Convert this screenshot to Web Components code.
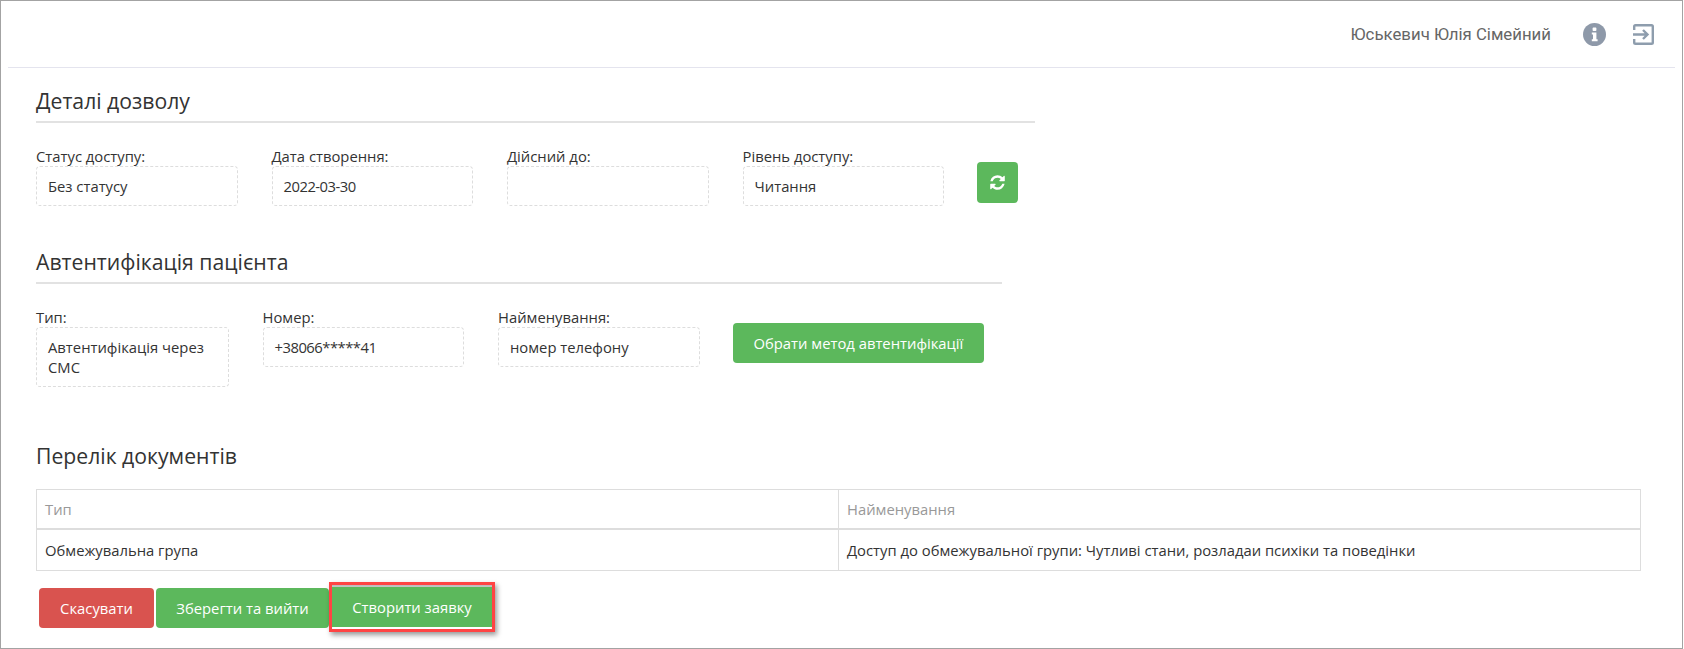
<!DOCTYPE html>
<html lang="uk">
<head>
<meta charset="utf-8">
<title>Деталі дозволу</title>
<style>
  html, body { margin: 0; padding: 0; background: #fff; overflow: hidden; }
  body { font-family: "Open Sans", "Noto Sans", sans-serif; font-size: 14.8px; color: #333; }
</style>
</head>
<body>
<x-app></x-app>

<script>
const REFRESH = 'M1639 1056q0 5-1 7-64 268-268 434.5t-478 166.5q-146 0-282.5-55t-243.5-157l-129 129q-19 19-45 19t-45-19-19-45v-448q0-26 19-45t45-19h448q26 0 45 19t19 45-19 45l-137 137q71 66 161 102t187 36q134 0 250-65t186-179q11-17 53-117 8-23 30-23h192q13 0 22.5 9.5t9.5 22.5zm25-800v448q0 26-19 45t-45 19h-448q-26 0-45-19t-19-45 19-45l138-138q-148-137-349-137-134 0-250 65t-186 179q-11 17-53 117-8 23-30 23h-199q-13 0-22.5-9.5t-9.5-22.5v-7q65-268 270-434.5t480-166.5q146 0 284 55.5t245 156.5l130-129q19-19 45-19t45 19 19 45z'

// section heading with the rule under it
customElements.define('x-heading', class extends HTMLElement {
  constructor () {
    super()
    this.attachShadow({mode: 'open'}).innerHTML = `
      <style>
        :host { display: block; }
        .t {
          font-size: 21.2px;
          line-height: 29px;
          color: #333;
          padding-bottom: 6px;
        }
        :host([rule]) .t { border-bottom: 2px solid #e2e2e2; }
      </style>
      <div class="t"><slot></slot></div>`
  }
})

// label + dashed read-only box
customElements.define('x-field', class extends HTMLElement {
  constructor () {
    super()
    this.attachShadow({mode: 'open'}).innerHTML = `
      <style>
        :host { display: block; width: var(--w, 201.5px); }
        label { display: block; font-size: 14.8px; line-height: 20px; color: #333; }
        .box {
          box-sizing: border-box;
          min-height: 40px;
          padding: 9px 11px;
          border: 1px dashed #ddd;
          border-radius: 4px;
          font-size: 14.8px;
          line-height: 20px;
          color: #333;
        }
      </style>
      <label>${this.getAttribute('label')}</label>
      <div class="box"><slot></slot></div>`
  }
})

customElements.define('x-btn', class extends HTMLElement {
  constructor () {
    super()
    this.attachShadow({mode: 'open'}).innerHTML = `
      <style>
        :host { display: inline-block; }
        button {
          display: flex;
          align-items: center;
          justify-content: center;
          box-sizing: border-box;
          height: var(--h, 40px);
          width: var(--w, auto);
          padding: 0 var(--px, 21px);
          border: 0;
          border-radius: var(--r, 4px);
          background: #5cb85c;
          color: #fff;
          font: 14.8px "Open Sans", "Noto Sans", sans-serif;
        }
        :host([danger]) button { background: #d9534f; }
        ::slotted(svg) { display: block; }
      </style>
      <button type="button"><slot></slot></button>`
  }
})

customElements.define('x-topbar', class extends HTMLElement {
  constructor () {
    super()
    this.attachShadow({mode: 'open'}).innerHTML = `
      <style>
        :host {
          display: flex;
          align-items: center;
          justify-content: flex-end;
          height: 66px;
          margin: 0 7px 0 7px;
          padding-right: 21px;
          border-bottom: 1px solid #e4e4ee;
        }
        .name { font: 16.8px Roboto, sans-serif; color: #666; margin-right: 32px; }
        .info { margin-right: 27px; display: block; }
        .out { display: block; }
      </style>
      <span class="name"><slot></slot></span>
      <svg class="info" width="23" height="23" viewBox="0 0 23 23">
        <circle cx="11.5" cy="11.5" r="11.5" fill="#8e99a9"/>
        <rect x="9.6" y="4.6" width="3.8" height="3.4" rx=".8" fill="#fff"/>
        <path d="M8.8 9.6h4.600v6.600h1.200v2h-5.800v-2h1.200v-4.600h-1.200z" fill="#fff"/>
      </svg>
      <svg class="out" width="21" height="21" viewBox="0 0 21 21" fill="none" stroke="#8e9dad" stroke-width="2.4">
        <path d="M1.200 6V2.500Q1.200 1.200 2.500 1.200h16Q19.800 1.200 19.800 2.500v16q0 1.300-1.300 1.300h-16Q1.200 19.800 1.200 18.500V15"/>
        <path d="M0 10.500h14M10 6l4.500 4.500L10 15"/>
      </svg>`
  }
})

customElements.define('x-doc-table', class extends HTMLElement {
  constructor () {
    super()
    this.attachShadow({mode: 'open'}).innerHTML = `
      <style>
        :host { display: block; }
        table { width: 100%; border-collapse: collapse; table-layout: fixed; font-size: 14.8px; }
        th, td {
          border: 1px solid #ddd;
          padding: 1px 8px 0;
          text-align: left;
          line-height: 20px;
          box-sizing: border-box;
        }
        th { font-weight: 400; color: #999; border-bottom-width: 2px; height: 39px; }
        td { color: #333; height: 42px; }
        .a { width: 802px; }
      </style>
      <table>
        <thead><tr><th class="a">Тип</th><th>Найменування</th></tr></thead>
        <tbody><tr><td>Обмежувальна група</td><td>Доступ до обмежувальної групи: Чутливі стани, розладаи психіки та поведінки</td></tr></tbody>
      </table>`
  }
})

customElements.define('x-app', class extends HTMLElement {
  constructor () {
    super()
    this.attachShadow({mode: 'open'}).innerHTML = `
      <style>
        :host {
          display: block;
          box-sizing: border-box;
          width: 1683px;
          height: 649px;
          border: 1px solid #a3a3a3;
        }
        main { padding: 18px 41px 0 35px; }
        .perm { width: 999px; }
        .auth { width: 966px; margin-top: 41px; }
        .row { display: flex; margin-top: 23px; gap: 34px; }
        .docs { margin-top: 54px; }
        .tbl { margin-top: 13px; }
        .actions { display: flex; gap: 2px; margin: 17px 0 0 3px; align-items: flex-start; }
        /* red annotation frame around the last button */
        .hl {
          box-sizing: border-box;
          margin: -6px 0 -4px -2px;
          padding: 2px 0;
          border: 3px solid #ff4444;
          background: #fff;
          box-shadow: 2px 3px 5px rgba(0,0,0,.4), inset 0 2px 1px #bdbdbd;
          --r: 0;
          --w: 160px;
          --px: 0;
        }
        .refresh { margin-top: 16px; margin-left: -1px; }
        .pick { margin-top: 16px; margin-left: -1px; }
        .tight { letter-spacing: -.5px; }
      </style>
      <x-topbar>Юськевич Юлія Сімейний</x-topbar>
      <main>
        <section class="perm">
          <x-heading rule>Деталі дозволу</x-heading>
          <div class="row">
            <x-field label="Статус доступу:">Без статусу</x-field>
            <x-field label="Дата створення:"><span class="tight">2022-03-30</span></x-field>
            <x-field label="Дійсний до:"></x-field>
            <x-field label="Рівень доступу:">Читання</x-field>
            <x-btn class="refresh" style="--w:41px;--h:41px;--px:0">
              <svg width="17" height="17" viewBox="0 0 1792 1792" fill="#fff"><path d="${REFRESH}"/></svg>
            </x-btn>
          </div>
        </section>
        <section class="auth">
          <x-heading rule>Автентифікація пацієнта</x-heading>
          <div class="row">
            <x-field label="Тип:" style="--w:192.5px">Автентифікація через СМС</x-field>
            <x-field label="Номер:"><span class="tight">+38066*****41</span></x-field>
            <x-field label="Найменування:">номер телефону</x-field>
            <x-btn class="pick">Обрати метод автентифікації</x-btn>
          </div>
        </section>
        <section class="docs">
          <x-heading>Перелік документів</x-heading>
          <x-doc-table class="tbl"></x-doc-table>
          <div class="actions">
            <x-btn danger style="--w:115px;--px:0">Скасувати</x-btn>
            <x-btn style="--w:173px;--px:0">Зберегти та вийти</x-btn>
            <x-btn class="hl">Створити заявку</x-btn>
          </div>
        </section>
      </main>`
  }
})
</script>
</body>
</html>
